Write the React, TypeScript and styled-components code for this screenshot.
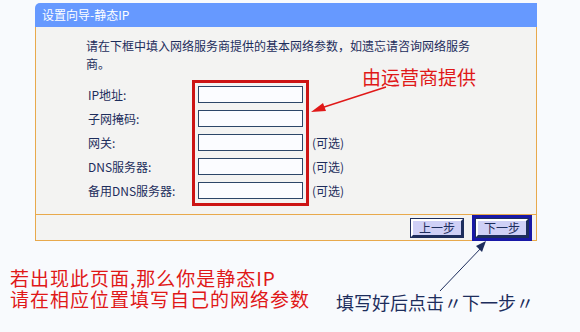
import styled, { createGlobalStyle } from 'styled-components';

const GlobalStyle = createGlobalStyle`
  html, body {
    margin: 0;
    padding: 0;
    background: #f8fafd;
  }
  body {
    font-family: 'Noto Sans CJK SC', 'DejaVu Sans', sans-serif;
  }
`;

const colors = {
  header: '#6699ff',
  body: '#f3f3f2',
  frame: '#e8a94c',
  ink: '#1d2d5c',
  field: '#2c4668',
  red: '#e01818',
  redBox: '#cc1414',
  button: '#cfd0f6',
  focus: '#1818a6',
};

const Stage = styled.div`
  position: relative;
  width: 580px;
  height: 332px;
  overflow: hidden;
  padding-top: 3px;
  box-sizing: border-box;
`;

const Panel = styled.div`
  margin-left: 35px;
  width: 502px;
  display: flex;
  flex-direction: column;
`;

const PanelHeader = styled.div`
  height: 24px;
  line-height: 24px;
  background: ${colors.header};
  color: #ffffff;
  font-size: 12px;
  padding-left: 7px;
  border-radius: 5px 0 0 0;
`;

const PanelBody = styled.div`
  background: ${colors.body};
  border-left: 1px solid ${colors.frame};
  border-right: 1px solid ${colors.frame};
  padding: 10px 0 8px 50px;
`;

const Intro = styled.p`
  margin: 0;
  width: 392px;
  font-size: 12px;
  line-height: 18px;
  color: ${colors.ink};
`;

const FormArea = styled.div`
  display: flex;
  margin-top: 7px;
`;

const LabelColumn = styled.div`
  width: 106px;
  padding: 6px 0 0 2px;
  box-sizing: border-box;
  display: flex;
  flex-direction: column;
  gap: 7px;
`;

const FieldLabel = styled.div`
  height: 17px;
  line-height: 17px;
  font-size: 12px;
  color: ${colors.ink};
`;

const RedBox = styled.div`
  border: 3px solid ${colors.redBox};
  padding: 3px 3px 4px;
  display: flex;
  flex-direction: column;
  gap: 7px;
`;

const TextInput = styled.input`
  width: 105px;
  height: 17px;
  box-sizing: border-box;
  border: 1px solid ${colors.field};
  background: #fbfcff;
  margin: 0;
  padding: 0 3px;
  outline: none;
`;

const OptionColumn = styled.div`
  padding: 6px 0 0 3px;
  display: flex;
  flex-direction: column;
  gap: 7px;
`;

const OptionNote = styled.div<{ $blank?: boolean }>`
  height: 17px;
  line-height: 17px;
  font-size: 12px;
  color: ${colors.ink};
  visibility: ${(p) => (p.$blank ? 'hidden' : 'visible')};
`;

const PanelFooter = styled.div`
  height: 25px;
  background: ${colors.body};
  border: 1px solid ${colors.frame};
  display: flex;
  align-items: center;
  justify-content: flex-end;
  gap: 9px;
  padding-right: 4px;
`;

const StepButton = styled.button`
  width: 52px;
  height: 18px;
  padding: 0;
  box-sizing: border-box;
  background: ${colors.button};
  border: 2px solid ${colors.ink};
  border-top-color: #ffffff;
  border-left-color: #ffffff;
  outline: 1px solid ${colors.ink};
  color: ${colors.ink};
  font-family: inherit;
  font-size: 12px;
  line-height: 14px;
`;

const FocusRing = styled.div`
  border: 3px solid ${colors.focus};
  padding: 1px;
  display: flex;
`;

const BottomRow = styled.div`
  display: flex;
  align-items: flex-end;
  margin-top: 26px;
  padding-left: 10px;
`;

const RedNote = styled.div`
  width: 326px;
  font-size: 19px;
  line-height: 21px;
  letter-spacing: 1px;
  color: ${colors.red};
`;

const BlueNote = styled.div`
  font-size: 18px;
  line-height: 20px;
  color: ${colors.ink};
  margin-bottom: -3px;
`;

const Callout = styled.div`
  position: absolute;
  left: 362px;
  top: 67px;
  font-size: 19px;
  line-height: 20px;
  color: ${colors.red};
`;

const Arrows = styled.svg`
  position: absolute;
  left: 0;
  top: 0;
  pointer-events: none;
`;

const fields = [
  { label: 'IP地址:', optional: false },
  { label: '子网掩码:', optional: false },
  { label: '网关:', optional: true },
  { label: 'DNS服务器:', optional: true },
  { label: '备用DNS服务器:', optional: true },
];

export default function App() {
  return (
    <>
      <GlobalStyle />
      <Stage>
        <Panel>
          <PanelHeader>设置向导-静态IP</PanelHeader>
          <PanelBody>
            <Intro>
              请在下框中填入网络服务商提供的基本网络参数，如遗忘请咨询网络服务商。
            </Intro>
            <FormArea>
              <LabelColumn>
                {fields.map((f) => (
                  <FieldLabel key={f.label}>{f.label}</FieldLabel>
                ))}
              </LabelColumn>
              <RedBox>
                {fields.map((f) => (
                  <TextInput key={f.label} type='text' />
                ))}
              </RedBox>
              <OptionColumn>
                {fields.map((f) => (
                  <OptionNote key={f.label} $blank={!f.optional}>
                    (可选)
                  </OptionNote>
                ))}
              </OptionColumn>
            </FormArea>
          </PanelBody>
          <PanelFooter>
            <StepButton>上一步</StepButton>
            <FocusRing>
              <StepButton>下一步</StepButton>
            </FocusRing>
          </PanelFooter>
        </Panel>

        <BottomRow>
          <RedNote>
            若出现此页面,那么你是静态IP
            <br />
            请在相应位置填写自己的网络参数
          </RedNote>
          <BlueNote>填写好后点击〃下一步〃</BlueNote>
        </BottomRow>

        <Callout>由运营商提供</Callout>

        <Arrows width='580' height='332' viewBox='0 0 580 332'>
          <line x1='386' y1='87' x2='318' y2='109' stroke={colors.red} strokeWidth='1.4' />
          <polygon points='311,112 323,103 326,111' fill={colors.red} />
          <line x1='440' y1='291' x2='482' y2='247' stroke={colors.ink} strokeWidth='1' />
          <polygon points='486,241 476,246 482,252' fill={colors.ink} />
        </Arrows>
      </Stage>
    </>
  );
}
